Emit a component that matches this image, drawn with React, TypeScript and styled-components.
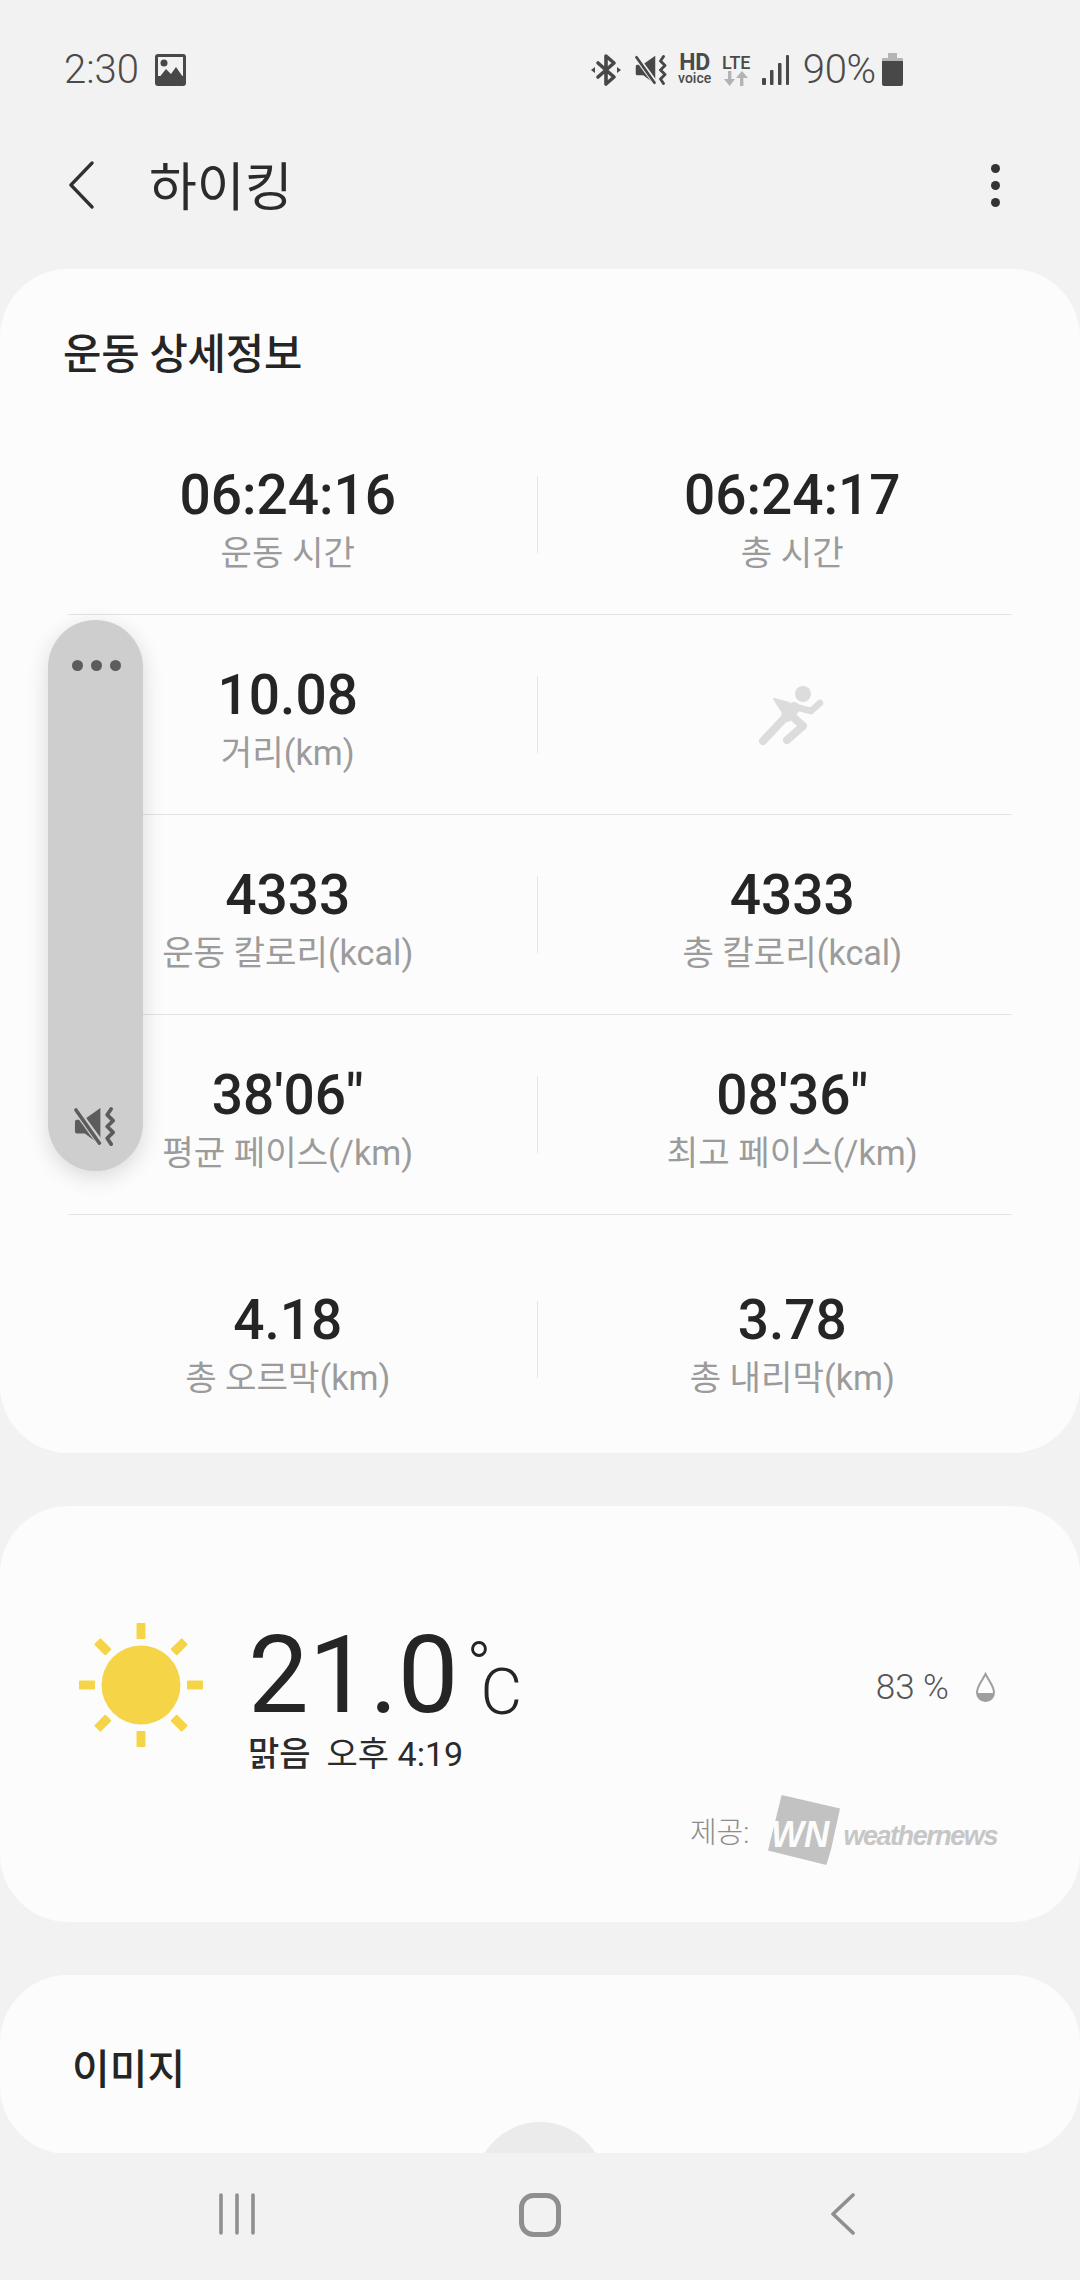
import React from "react";
import styled, { createGlobalStyle } from "styled-components";

const Global = createGlobalStyle`
  html, body { margin: 0; padding: 0; background: #f2f2f2; }
  body { font-family: Roboto, "Noto Sans CJK KR", sans-serif; }
`;

const Page = styled.div`
  width: 1080px; height: 2280px; display: flex; flex-direction: column;
  background: #f2f2f2; overflow: hidden; position: relative;
`;
const Scroll = styled.main`
  flex: 1; min-height: 0; overflow: hidden; display: flex; flex-direction: column; gap: 53px;
`;
const StatusBar = styled.header`
  height: 136px; flex: none; display: flex; align-items: center; padding: 3px 177px 0 64px; box-sizing: border-box; color: #4a4a4a;
`;
const StatusTime = styled.span`font-size: 40px; font-weight: 300; margin-right: 16px; line-height: 1;`;
const StatusRight = styled.div`margin-left: auto; display: flex; align-items: center;`;
const HdBlock = styled.div`display: flex; flex-direction: column; align-items: center; width: 34px; margin: 0 9px 0 10px; line-height: 1;`;
const HdText = styled.span`font-size: 23px; font-weight: 700; line-height: 18px; letter-spacing: -.3px;`;
const VoiceText = styled.span`font-size: 14px; font-weight: 500; line-height: 13px;`;
const LteBlock = styled.div`display: flex; flex-direction: column; align-items: center; width: 31px; margin-right: 10px;`;
const LteText = styled.span`font-size: 18px; font-weight: 500; line-height: 17px; letter-spacing: -.2px;`;
const Percent = styled.span`font-size: 40px; font-weight: 300; line-height: 1; margin: 0 6px 0 14px; letter-spacing: -.2px;`;

const TitleBar = styled.div`
  height: 98px; margin-bottom: 35px; flex: none; display: flex; align-items: center; padding: 0 80px 0 68px;
`;
const PageTitle = styled.h1`margin: 0 0 0 55px; padding-top: 7px; font-size: 52px; font-weight: 400; color: #2b2b2b; line-height: 1;`;
const Kebab = styled.div`margin-left: auto; display: flex; flex-direction: column; gap: 8px;`;
const KebabDot = styled.i`display: block; width: 9px; height: 9px; border-radius: 50%; background: #333;`;

const Card = styled.section`
  background: #fcfcfc; border-radius: 68px; flex: none; position: relative; overflow: hidden;
`;
const CardTitle = styled.h2`
  margin: 0; padding: 56px 63px 30px; font-size: 41.7px; font-weight: 500; line-height: 60px; color: #252525; letter-spacing: -.2px;
`;
const StatRow = styled.div<{ $top: number; $last?: boolean }>`
  position: relative; display: grid; grid-template-columns: 1fr 1px 1fr; padding: ${p => p.$top}px 36px ${p => (p.$last ? 45 : 32)}px;
  &::after { content: ""; display: ${p => (p.$last ? "none" : "block")}; position: absolute; left: 68px; right: 68px; bottom: 0; height: 1px; background: #e4e4e4; }
`;
const Stat = styled.div`display: flex; flex-direction: column; align-items: center;`;
const StatValue = styled.div`font-size: 55px; font-weight: 500; line-height: 58px; color: #252525;`;
const StatLabel = styled.div`font-size: 34.2px; font-weight: 400; line-height: 59px; color: #9b9b9b;`;
const Sep = styled.div`width: 1px; height: 77px; margin: 10px 0 0 -3px; background: #e6e6e6;`;
const RunnerCell = styled.div`display: flex; justify-content: center; padding-top: 17px;`;

const Weather = styled.div`display: flex; align-items: flex-start; padding: 114px 84px 0 79px;`;
const Sun = styled.svg`width: 124px; height: 124px; margin: 3px 45px 0 0; flex: none;`;
const TempCol = styled.div`display: flex; flex-direction: column;`;
const Temp = styled.div`display: flex; align-items: flex-start; height: 110px; color: #252525;`;
const TempNum = styled.span`font-size: 108px; font-weight: 400; line-height: 110px;`;
const TempDegree = styled.span`font-size: 66px; font-weight: 300; line-height: 66px; margin: 14px 0 0 8px;`;
const TempUnit = styled.span`font-size: 64px; font-weight: 300; line-height: 64px; margin: 41px 0 0 -11px;`;
const Cond = styled.div`font-size: 34px; line-height: 44px; color: #2b2b2b; display: flex; gap: 16px; padding-top: 2px;`;
const CondStrong = styled.b`font-weight: 500;`;
const Humidity = styled.div`margin: 47px 0 0 auto; display: flex; align-items: center; height: 40px; color: #555; font-size: 35px; font-weight: 300; gap: 26px;`;
const Provider = styled.div`display: flex; align-items: center; justify-content: flex-end; padding: 18px 83px 56px 0;`;
const ProviderLabel = styled.span`font-size: 29px; color: #8c8c8c; margin-right: 19px; font-weight: 300;`;
const LogoMark = styled.svg`width: 73px; height: 72px; flex: none; margin-right: 2px;`;
const LogoWord = styled.span`font-family: "Liberation Sans", sans-serif; font-style: italic; font-weight: 700; font-size: 27px; letter-spacing: -1.45px; color: #c6c6c6; margin-top: 13px;`;

const ImageCard = styled(Card)`height: 179px;`;
const ImageTitle = styled.h2`margin: 0; padding: 70px 0 0 72px; font-size: 41px; font-weight: 500; line-height: 50px; color: #252525;`;
const Bump = styled.div`position: absolute; left: 475px; top: 147px; width: 130px; height: 130px; border-radius: 50%; background: #ebebeb;`;

const NavBar = styled.nav`
  height: 127px; flex: none; display: grid; grid-template-columns: repeat(3, 1fr); padding: 40px 86px 0; box-sizing: border-box; align-items: start; justify-items: center;
`;

const MuteIcon = ({ w, color, bg }: { w: number; color: string; bg: string }) => (
  <svg width={w} height={(w * 40) / 44} viewBox="0 0 44 40" fill="none">
    <path d="M3 13h7L27 1v38L11 27H3a2 2 0 0 1-2-2V15a2 2 0 0 1 2-2z" fill={color} />
    <path d="M0 0l29 40" stroke={bg} strokeWidth="7" />
    <path d="M2 3l24 34" stroke={color} strokeWidth="3.6" strokeLinecap="round" />
    <path d="M38 2l-4 6 6 6-6 6 6 6-6 6 4 6" stroke={color} strokeWidth="3.8" strokeLinecap="round" strokeLinejoin="round" />
  </svg>
);

const Float = styled.aside`
  position: absolute; left: 48px; top: 620px; width: 95px; height: 551px; border-radius: 48px; background: #cecece;
  box-shadow: 0 6px 22px rgba(0,0,0,.14); display: flex; flex-direction: column; align-items: center; justify-content: space-between; padding: 40px 0 25px; box-sizing: border-box;
`;
const FloatDots = styled.div`display: flex; gap: 8px; margin-left: 1px;`;
const FloatDot = styled.i`display: block; width: 11px; height: 11px; border-radius: 50%; background: #5c5c5c;`;

const rows = [
  { top: 51, a: ["06:24:16", "운동 시간"], b: ["06:24:17", "총 시간"] },
  { top: 51, a: ["10.08", "거리(km)"], b: null },
  { top: 51, a: ["4333", "운동 칼로리(kcal)"], b: ["4333", "총 칼로리(kcal)"] },
  { top: 51, a: ["38'06\"", "평균 페이스(/km)"], b: ["08'36\"", "최고 페이스(/km)"] },
  { top: 76, a: ["4.18", "총 오르막(km)"], b: ["3.78", "총 내리막(km)"], last: true },
];

const Runner = () => (
  <svg width="66" height="64" viewBox="0 0 66 64" fill="none">
    <circle cx="44" cy="11" r="8" fill="#dcdcdc" />
    <path d="M15 16l15 4-6 10z" fill="#dcdcdc" stroke="#dcdcdc" strokeWidth="2" strokeLinejoin="round" />
    <path d="M35 25L4 58" stroke="#dcdcdc" strokeWidth="8" strokeLinecap="round" />
    <path d="M37 24l15 4 9-8" stroke="#dcdcdc" strokeWidth="6.500" strokeLinecap="round" strokeLinejoin="round" />
    <path d="M33 33l11 10-16 14" stroke="#dcdcdc" strokeWidth="8" strokeLinecap="round" strokeLinejoin="round" />
    <path d="M35 25l-7 8" stroke="#dcdcdc" strokeWidth="12" strokeLinecap="round" />
  </svg>
);

const rays = [0, 45, 90, 135, 180, 225, 270, 315];

const BluetoothIcon = styled.svg`width: 30px; height: 34px; margin-right: 14px;`;

export default function App() {
  return (
    <Page>
      <Global />
      <StatusBar>
        <StatusTime>2:30</StatusTime>
        <svg width="31" height="32" viewBox="0 0 31 32">
          <rect width="31" height="32" rx="3" fill="#484848" />
          <rect x="3" y="3" width="25" height="19" fill="#f2f2f2" />
          <circle cx="9" cy="9" r="3.5" fill="#484848" />
          <path d="M3 25l8-10 5 5 5-7 7 10v3H3z" fill="#484848" />
        </svg>
        <StatusRight>
          <BluetoothIcon viewBox="0 0 30 34" fill="none">
            <path d="M7 10l16 14-8 7V3l8 7L7 24" stroke="#484848" strokeWidth="3.6" strokeLinejoin="round" strokeLinecap="round" />
            <path d="M0 17l4-3v6zM30 17l-4-3v6z" fill="#484848" />
          </BluetoothIcon>
          <MuteIcon w={33} color="#484848" bg="#f2f2f2" />
          <HdBlock>
            <HdText>HD</HdText>
            <VoiceText>voice</VoiceText>
          </HdBlock>
          <LteBlock>
            <LteText>LTE</LteText>
            <svg width="24" height="15" viewBox="0 0 24 15" fill="#b3b3b3">
              <path d="M4 0h3.4v8H11l-5.3 7L0 8h4zM16 15h3.4V7H24l-6-7-6 7h4z" />
            </svg>
          </LteBlock>
          <svg width="27" height="30" viewBox="0 0 27 30" fill="#484848">
            <rect x="0" y="23" width="4" height="7" rx="1" />
            <rect x="8" y="15" width="3.5" height="15" rx="1" />
            <rect x="16" y="8" width="3.5" height="22" rx="1" />
            <rect x="24" y="0" width="3" height="30" rx="1" />
          </svg>
          <Percent>90%</Percent>
          <svg width="21" height="33" viewBox="0 0 21 33">
            <path d="M6 0h9v5H6z" fill="#b5b5b5" />
            <path d="M1 5h19a1 1 0 0 1 1 1v2H0V6a1 1 0 0 1 1-1z" fill="#b5b5b5" />
            <path d="M0 8h21v23a2 2 0 0 1-2 2H2a2 2 0 0 1-2-2z" fill="#484848" />
          </svg>
        </StatusRight>
      </StatusBar>
      <TitleBar>
        <svg width="26" height="48" viewBox="0 0 26 48" fill="none">
          <path d="M24 2L2 24l0 0L24 46" stroke="#303030" strokeWidth="3.4" strokeLinecap="round" strokeLinejoin="round" transform="translate(1 0) scale(.96 1)" />
        </svg>
        <PageTitle>하이킹</PageTitle>
        <Kebab>
          <KebabDot />
          <KebabDot />
          <KebabDot />
        </Kebab>
      </TitleBar>
      <Scroll>
        <Card>
          <CardTitle>운동 상세정보</CardTitle>
          {rows.map((r, i) => (
            <StatRow key={i} $top={r.top} $last={r.last}>
              <Stat>
                <StatValue>{r.a[0]}</StatValue>
                <StatLabel>{r.a[1]}</StatLabel>
              </Stat>
              <Sep />
              {r.b ? (
                <Stat>
                  <StatValue>{r.b[0]}</StatValue>
                  <StatLabel>{r.b[1]}</StatLabel>
                </Stat>
              ) : (
                <RunnerCell>
                  <Runner />
                </RunnerCell>
              )}
            </StatRow>
          ))}
        </Card>
        <Card>
          <Weather>
            <Sun viewBox="0 0 124 124">
              <circle cx="62" cy="62" r="39.5" fill="#f5d547" />
              {rays.map(a => (
                <rect key={a} x="57.5" y="0" width="9" height="16" rx="1" fill="#f5d547" transform={`rotate(${a} 62 62)`} />
              ))}
            </Sun>
            <TempCol>
              <Temp>
                <TempNum>21.0</TempNum>
                <TempDegree>°</TempDegree>
                <TempUnit>C</TempUnit>
              </Temp>
              <Cond>
                <CondStrong>맑음</CondStrong>
                <span>오후 4:19</span>
              </Cond>
            </TempCol>
            <Humidity>
              <span>83 %</span>
              <svg width="21" height="31" viewBox="0 0 21 31" fill="none">
                <path d="M10.5 2C7 9 2 14 2 20.500a8.500 8.500 0 0 0 17 0C19 14 14 9 10.500 2z" stroke="#9e9e9e" strokeWidth="2" />
                <path d="M2 21h17a8.500 8.500 0 0 1-17 0z" fill="#9e9e9e" />
              </svg>
            </Humidity>
          </Weather>
          <Provider>
            <ProviderLabel>제공:</ProviderLabel>
            <LogoMark viewBox="0 0 75 72">
              <path d="M14 0l60 14-9 41-5 17L0 57z" fill="#c2c2c2" />
              <text x="3" y="53" fontFamily="Liberation Sans" fontWeight="700" fontStyle="italic" fontSize="37" fill="#fcfcfc" textLength="60" lengthAdjust="spacingAndGlyphs">WN</text>
            </LogoMark>
            <LogoWord>weathernews</LogoWord>
          </Provider>
        </Card>
        <ImageCard>
          <ImageTitle>이미지</ImageTitle>
          <Bump />
        </ImageCard>
      </Scroll>
      <NavBar>
        <svg width="36" height="42" viewBox="0 0 36 42" fill="none" stroke="#8f8f8f" strokeWidth="3.6" strokeLinecap="round">
          <path d="M2 2v38M18 2v38M34 2v38" />
        </svg>
        <svg width="42" height="44" viewBox="0 0 42 44" fill="none">
          <rect x="2.500" y="2.500" width="37" height="39" rx="12" stroke="#8f8f8f" strokeWidth="5" />
        </svg>
        <svg width="24" height="42" viewBox="0 0 24 42" fill="none">
          <path d="M22 2L2 21l20 19" stroke="#8f8f8f" strokeWidth="3.6" strokeLinecap="round" strokeLinejoin="round" />
        </svg>
      </NavBar>
      <Float>
        <FloatDots>
          <FloatDot />
          <FloatDot />
          <FloatDot />
        </FloatDots>
        <MuteIcon w={43} color="#5c5c5c" bg="#cecece" />
      </Float>
    </Page>
  );
}
